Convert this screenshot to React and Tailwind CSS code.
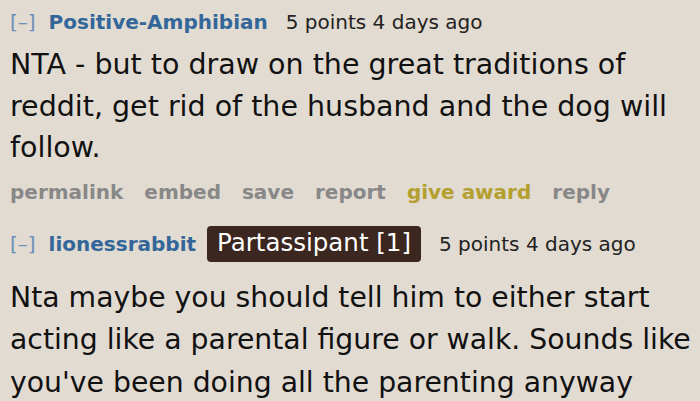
const font = { fontFamily: '"DejaVu Sans", Verdana, sans-serif' };

const actions = ["permalink", "embed", "save", "report", "give award", "reply"];

function Header({ user, flair }) {
  return (
    <div className="flex items-center h-[36px] text-[20px] leading-none">
      <span className="text-[#6b8fb8]">[–]</span>
      <span className="ml-[13px] font-bold text-[#336699]">{user}</span>
      {flair && (
        <span className="ml-[11px] flex h-[36px] items-center rounded-[4px] bg-[#3b2620] px-[10px] text-[24.5px] text-white">
          {flair}
        </span>
      )}
      <span className="ml-[18px] text-[#222]">5 points 4 days ago</span>
    </div>
  );
}

export default function App() {
  return (
    <div className="h-[401px] w-[700px] overflow-hidden bg-[#e2dbd1] pl-[10px]" style={font}>
      <div className="pt-[4px]">
        <Header user="Positive-Amphibian" />
        <p className="mt-[4px] whitespace-nowrap text-[28.5px] leading-[41.5px] text-[#111]">
          NTA - but to draw on the great traditions of
          <br />
          reddit, get rid of the husband and the dog will
          <br />
          follow.
        </p>
        <div className="mt-[11px] flex gap-[21px] text-[20px] leading-[24px] font-bold text-[#888]">
          {actions.map((a) => (
            <span key={a} className={a === "give award" ? "text-[#b4a02f]" : ""}>
              {a}
            </span>
          ))}
        </div>
      </div>
      <div className="mt-[22px]">
        <Header user="lionessrabbit" flair="Partassipant [1]" />
        <p className="mt-[15px] whitespace-nowrap text-[28.3px] leading-[42.5px] text-[#111]">
          Nta maybe you should tell him to either start
          <br />
          acting like a parental figure or walk. Sounds like
          <br />
          you've been doing all the parenting anyway
        </p>
      </div>
    </div>
  );
}
